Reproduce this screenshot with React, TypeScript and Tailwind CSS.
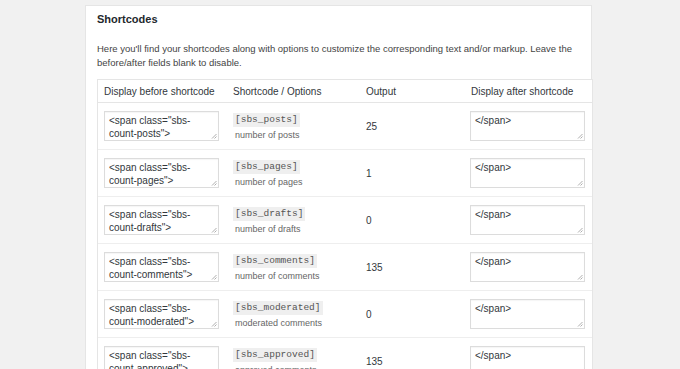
const rows = [
  { key: "posts", desc: "number of posts", out: "25" },
  { key: "pages", desc: "number of pages", out: "1" },
  { key: "drafts", desc: "number of drafts", out: "0" },
  { key: "comments", desc: "number of comments", out: "135" },
  { key: "moderated", desc: "moderated comments", out: "0" },
  { key: "approved", desc: "approved comments", out: "135" },
];

function Field({ value }: { value: string }) {
  return (
    <div className="relative w-[115px] h-[30px] border border-[#dcdcdc] bg-white px-[4px] pt-[2px] text-[10px] leading-[13px] text-[#32373c] shadow-[inset_0_1px_1px_rgba(0,0,0,0.04)]">
      {value}
      <svg className="absolute right-[1px] bottom-[1px]" width="6" height="6" viewBox="0 0 6 6">
        <path d="M5.5 1 L1 5.5 M5.5 3.5 L3.5 5.5" stroke="#999" strokeWidth="0.8" />
      </svg>
    </div>
  );
}

export default function App() {
  return (
    <div className="w-[680px] h-[369px] overflow-hidden bg-[#f1f1f1] font-['Liberation_Sans',Arial,sans-serif] text-[#444]">
      <div className="ml-[85px] mt-[5px] w-[507px] min-h-[400px] bg-white border border-[#e5e5e5] pl-[11px] pt-[1px]">
        <h2 className="text-[11px] font-bold text-[#23282d] leading-[24px]">Shortcodes</h2>
        <p className="mt-[11px] whitespace-nowrap text-[9.5px] leading-[14px] text-[#444]">
          Here you'll find your shortcodes along with options to customize the corresponding text and/or markup. Leave the
          <br />
          before/after fields blank to disable.
        </p>
        <div className="mt-[9px] w-[496px] border border-[#e5e5e5] bg-white">
          <div className="grid grid-cols-[128px_133px_105px_128px] h-[23px] items-center border-b border-[#e5e5e5] text-[10px] text-[#32373c]">
            <div className="pl-[6px]">Display before shortcode</div>
            <div className="pl-[7px]">Shortcode / Options</div>
            <div className="pl-[7px]">Output</div>
            <div className="pl-[7px]">Display after shortcode</div>
          </div>
          {rows.map((r) => (
            <div
              key={r.key}
              className="grid grid-cols-[128px_133px_105px_128px] h-[47px] items-center border-b border-[#eeeeee] text-[10px]"
            >
              <div className="pl-[6px]">
                <Field value={`<span class="sbs-count-${r.key}">`} />
              </div>
              <div className="pl-[7px]">
                <code className="inline-block bg-[#efefef] px-[2px] h-[14px] leading-[14px] font-['Liberation_Mono',monospace] text-[9.5px] text-[#555]">
                  [sbs_{r.key}]
                </code>
                <div className="mt-[3px] pl-[2px] text-[9px] leading-[11px] text-[#666]">{r.desc}</div>
              </div>
              <div className="pl-[7px] text-[#32373c]">{r.out}</div>
              <div className="pl-[6px]">
                <Field value="</span>" />
              </div>
            </div>
          ))}
        </div>
      </div>
    </div>
  );
}
